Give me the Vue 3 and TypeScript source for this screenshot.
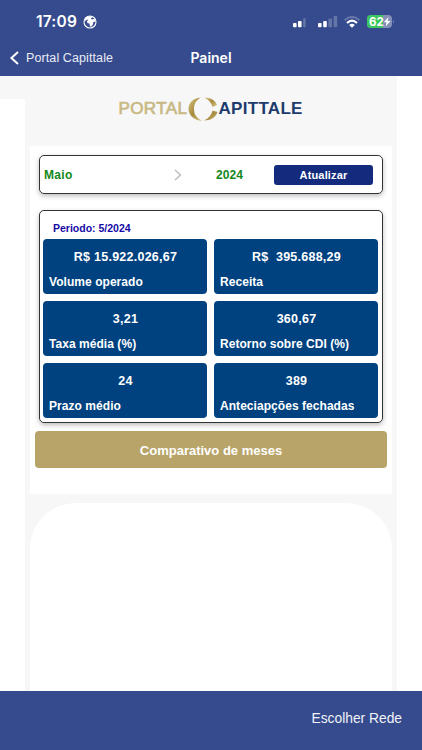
<script setup lang="ts">
interface Metric {
  value: string
  label: string
}

const metrics: Metric[] = [
  { value: 'R$ 15.922.026,67', label: 'Volume operado' },
  { value: 'R$\u00a0 395.688,29', label: 'Receita' },
  { value: '3,21', label: 'Taxa média (%)' },
  { value: '360,67', label: 'Retorno sobre CDI (%)' },
  { value: '24', label: 'Prazo médio' },
  { value: '389', label: 'Anteciapções fechadas' },
]
</script>

<template>
  <div class="screen">
    <header class="header">
      <div class="status">
        <span class="clock">17:09</span>
        <svg class="globe" width="14" height="14" viewBox="0 0 14 14">
          <circle cx="7" cy="7" r="6" fill="none" stroke="#fff" stroke-width="1.1" />
          <path d="M1.500 4.200 4.400 1.500 8 1.200 9.400 2.600 7.800 3.600 9 4.400 11.500 3.800 12.600 6.500 10.400 7 9.900 9.600 8 12 6.700 10.800 6.600 8.600 4.600 8.200 3.800 6.300 5.200 5 4.200 4.500 2.200 6z" fill="#fff" />
        </svg>
        <svg class="indicators" width="104" height="16" viewBox="0 0 104 16">
          <g fill="#fff">
            <rect x="1" y="9" width="3.600" height="4.200" rx="1" />
            <rect x="6" y="7" width="3.600" height="6.200" rx="1" />
            <rect x="26" y="9" width="3.600" height="4.200" rx="1" />
            <rect x="31.200" y="7" width="3.600" height="6.200" rx="1" />
          </g>
          <g fill="#6475a8">
            <rect x="11.200" y="4.200" width="2.500" height="9" rx=".8" />
            <rect x="36.400" y="4.600" width="3.600" height="8.600" rx="1" />
            <rect x="41.600" y="2" width="3.600" height="11.200" rx="1" />
          </g>
          <g fill="none" stroke-width="2.100">
            <path d="M52.600 6.300Q60 -.5 67.400 6.300" stroke="#6475a8" />
            <path d="M55 9Q60 4.300 65 9" stroke="#fff" />
          </g>
          <path d="M57.200 10.900Q60 8.800 62.800 10.900L60 13.700z" fill="#fff" />
          <rect x="75" y="1" width="25" height="13" rx="4" fill="#8490b8" />
          <path d="M79 1H91V14H79A4 4 0 0 1 75 10V5A4 4 0 0 1 79 1Z" fill="#3cc75c" />
          <path d="M101 5.500Q102.500 7.500 101 9.500z" fill="#8490b8" />
          <text x="77" y="11.700" class="charge">62</text>
          <path d="M96.500 3 91.800 8.300H94.600L93.600 12.400 98.600 6.900H95.600z" fill="#fff" />
        </svg>
      </div>
      <nav class="nav">
        <span class="back">
          <svg width="10" height="14" viewBox="0 0 10 14">
            <path d="M9 1 2.400 7 9 13" fill="none" stroke="#fff" stroke-width="2" />
          </svg>
          <span>Portal Capittale</span>
        </span>
        <span class="title">Painel</span>
      </nav>
    </header>

    <main class="body">
      <div class="gutter"></div>
      <div class="column">
        <div class="logo">
          <span class="gold">PORTAL</span>
          <svg width="30" height="24" viewBox="0 0 30 24">
            <defs>
              <linearGradient id="metal" x1="0" y1="0" x2="1" y2="1">
                <stop offset="0" stop-color="#d8c680" />
                <stop offset=".5" stop-color="#a78b3f" />
                <stop offset="1" stop-color="#d9ca91" />
              </linearGradient>
            </defs>
            <path d="M13 .5C5 1 .5 6 .5 12S6 23.500 14 24C8 20 6 17 6 12S8 3 13 .5Z" fill="url(#metal)" />
            <path d="M16 .5C23 .5 27.500 3.500 29 8L24.500 10C23 5 20 2 16 .5Z" fill="url(#metal)" />
            <path d="M24.500 13.500 29.500 15C28 20 23 23.500 16 23.500 20.500 21.500 23.500 18 24.500 13.500Z" fill="url(#metal)" />
          </svg>
          <span class="navy">APITTALE</span>
        </div>

        <section class="panel">
          <div class="filter">
            <span class="month">Maio</span>
            <svg class="chevron" width="8" height="12" viewBox="0 0 8 12">
              <path d="M1 1 6.500 6 1 11" fill="none" stroke="#b9b9bd" stroke-width="1.300" />
            </svg>
            <span class="year">2024</span>
            <button class="update">Atualizar</button>
          </div>

          <div class="card">
            <div class="period">Periodo: 5/2024</div>
            <div class="grid">
              <div v-for="m in metrics" :key="m.label" class="tile">
                <div class="value">{{ m.value }}</div>
                <div class="label">{{ m.label }}</div>
              </div>
            </div>
          </div>

          <button class="compare">Comparativo de meses</button>
        </section>

        <section class="sheet"></section>
      </div>
    </main>

    <footer class="footer">Escolher Rede</footer>
  </div>
</template>

<style>
body {
  background: #fff;
}
</style>

<style scoped>
.screen {
  width: 422px;
  height: 750px;
  display: flex;
  flex-direction: column;
  overflow: hidden;
  background: #fff;
  font-family: "Liberation Sans", Arial, sans-serif;
}
.screen * {
  box-sizing: border-box;
}
.header {
  height: 76px;
  flex: none;
  background: #364b8d;
  color: #fff;
}
.status {
  height: 42px;
  padding: 14px 26px 0 36px;
  display: flex;
  align-items: flex-start;
}
.clock {
  font: 600 15.500px/16px Inter, sans-serif;
  letter-spacing: 0.2px;
  width: 43px;
}
.globe {
  margin: 1px 0 0 3.500px;
}
.indicators {
  margin-left: auto;
}
.charge {
  font: 700 11.500px Inter, sans-serif;
  fill: #fff;
}
.nav {
  display: grid;
  grid-template-columns: 1fr auto 1fr;
  align-items: center;
  height: 32px;
  padding: 0 9px;
}
.back {
  display: flex;
  align-items: center;
  gap: 7px;
  font-size: 12.500px;
  letter-spacing: 0.1px;
  white-space: nowrap;
  color: #e9ecf5;
}
.title {
  font: 600 14px/20px Inter, sans-serif;
}
.body {
  flex: 1;
  min-height: 0;
  display: flex;
}
.gutter {
  width: 25px;
  height: 22.500px;
  background: #f7f7f7;
}
.column {
  width: 372px;
  padding: 0 5px;
  display: flex;
  flex-direction: column;
  background: #f7f7f7;
}
.logo {
  height: 70px;
  flex: none;
  display: flex;
  align-items: flex-start;
  padding: 21px 0 0 88.500px;
  font-size: 17px;
  line-height: 23px;
}
.gold {
  width: 69px;
  letter-spacing: 0.4px;
  color: #c8b984;
  -webkit-text-stroke: 0.7px #c8b984;
}
.navy {
  color: #1d3b6c;
  font-weight: 700;
  letter-spacing: 0.3px;
  margin-left: 1px;
}
.panel {
  height: 348px;
  flex: none;
  padding: 9px 5px 0;
  background: #fff;
}
.filter {
  height: 39px;
  margin: 0 4px 16px;
  padding: 0 9px 0 4px;
  display: flex;
  align-items: center;
  border: 1px solid #333;
  border-radius: 5px;
  box-shadow: 0 2px 5px #0004;
  color: #15871a;
  font-size: 12px;
  letter-spacing: 0.1px;
  font-weight: 700;
}
.month {
  width: 130px;
  letter-spacing: 0.3px;
}
.year {
  margin-left: 34px;
}
.update {
  width: 99px;
  height: 20px;
  margin-left: auto;
  padding: 0;
  border: 0;
  border-radius: 3px;
  background: #142a7c;
  color: #fff;
  font: 700 11px "Liberation Sans", Arial, sans-serif;
  letter-spacing: 0.15px;
}
.card {
  height: 213px;
  margin: 0 4px 8px;
  padding: 0 4px 0 3px;
  border: 1px solid #333;
  border-radius: 5px;
  box-shadow: 0 2px 5px #0004;
}
.period {
  height: 28px;
  padding: 10px 0 0 10px;
  color: #1509a5;
  font-size: 10.500px;
  line-height: 14px;
  font-weight: 700;
}
.grid {
  display: grid;
  grid-template-columns: 1fr 1fr;
  grid-auto-rows: 55px;
  gap: 7px;
}
.tile {
  padding: 11px 5px 0 6px;
  border-radius: 4px;
  background: #00427f;
  color: #fff;
  font-weight: 700;
}
.value {
  font-size: 12.500px;
  line-height: 15px;
  letter-spacing: 0.25px;
  text-align: center;
  white-space: nowrap;
}
.label {
  margin-top: 10px;
  font-size: 12px;
  line-height: 15px;
  letter-spacing: 0.05px;
  white-space: nowrap;
}
.compare {
  display: block;
  width: 100%;
  height: 37px;
  padding: 1px 0 0;
  border: 0;
  border-radius: 4px;
  background: #b8a468;
  color: #fff;
  font: 700 13px "Liberation Sans", Arial, sans-serif;
}
.sheet {
  flex: 1;
  margin-top: 9px;
  background: #fff;
  border-radius: 46px 46px 0 0;
}
.footer {
  height: 59px;
  flex: none;
  padding: 19px 20px 0 0;
  background: #364b8d;
  color: #f0f2f8;
  font-size: 13.800px;
  line-height: 18px;
  text-align: right;
}
</style>
